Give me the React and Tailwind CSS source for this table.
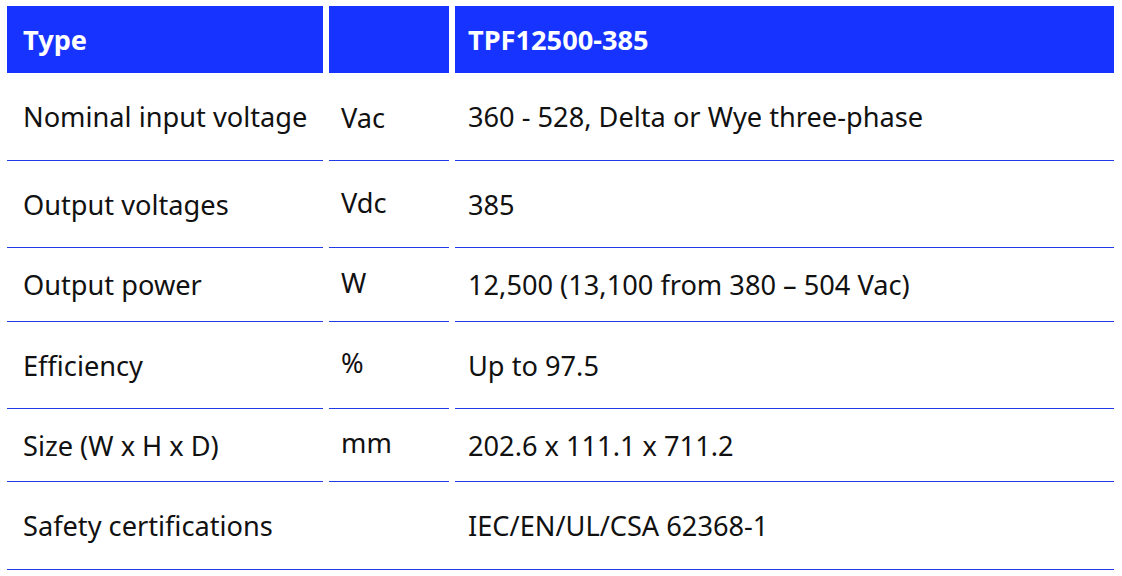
const rows = [
  { label: "Nominal input voltage", unit: "Vac", value: "360 - 528, Delta or Wye three-phase", h: "h-[88px]", unitPad: "pt-[2px]" },
  { label: "Output voltages", unit: "Vdc", value: "385", h: "h-[87px]", unitPad: "pb-[3px]" },
  { label: "Output power", unit: "W", value: "12,500 (13,100 from 380 – 504 Vac)", h: "h-[74px]", unitPad: "pb-[3px]" },
  { label: "Efficiency", unit: "%", value: "Up to 97.5", h: "h-[87px]", unitPad: "pb-[5px]" },
  { label: "Size (W x H x D)", unit: "mm", value: "202.6 x 111.1 x 711.2", h: "h-[73px]", unitPad: "pb-[5px]" },
];

const App = () => {
  return (
    <div
      className="w-[1122px] h-[576px] bg-white pt-[6px] pl-[7px] text-[#111] text-[27.2px] leading-none"
      style={{ fontFamily: '"Noto Sans", "Open Sans", sans-serif' }}
    >
      <div className="w-[1107px]">
        <div className="grid grid-cols-[316px_120px_659px] gap-x-[6px] h-[67px] text-white font-bold">
          <div className="bg-[#1733ff] flex items-center pl-4">Type</div>
          <div className="bg-[#1733ff]"></div>
          <div className="bg-[#1733ff] flex items-center pl-[13px]">TPF12500-385</div>
        </div>

        {rows.map((r) => (
          <div key={r.label} className={`grid grid-cols-[316px_120px_659px] gap-x-[6px] ${r.h}`}>
            <div className="border-b border-[#1f3ae6] flex items-center pl-4 pt-[1px]">{r.label}</div>
            <div className={`border-b border-[#1f3ae6] flex items-center pl-3 ${r.unitPad}`}>{r.unit}</div>
            <div className="border-b border-[#1f3ae6] flex items-center pl-[13px] pt-[1px]">{r.value}</div>
          </div>
        ))}

        <div className="grid grid-cols-[316px_120px_659px] gap-x-[6px] h-[88px] border-b border-[#1f3ae6]">
          <div className="flex items-center pl-4 pt-[1px]">Safety certifications</div>
          <div></div>
          <div className="flex items-center pl-[13px] pt-[1px]">IEC/EN/UL/CSA 62368-1</div>
        </div>
      </div>
    </div>
  );
};

export default App;
